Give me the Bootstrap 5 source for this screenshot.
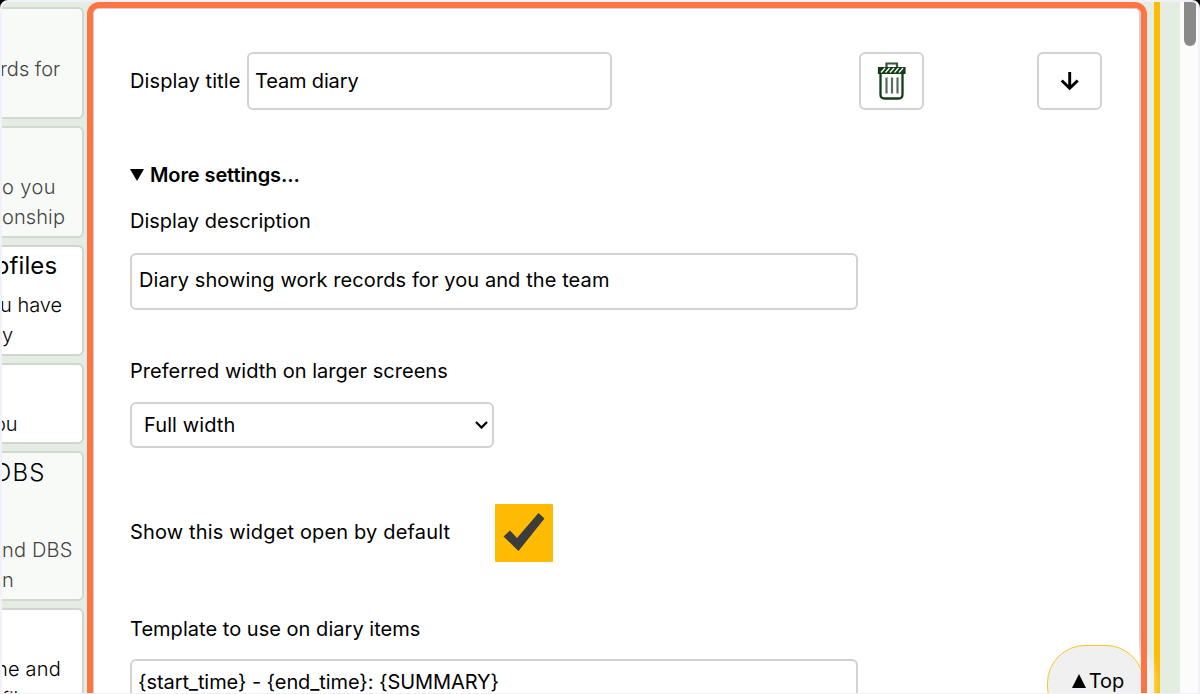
<!DOCTYPE html>
<html lang="en">
<head>
<meta charset="utf-8">
<meta name="viewport" content="width=device-width, initial-scale=1">
<title>Dashboard settings</title>
<link href="https://cdn.jsdelivr.net/npm/bootstrap@5.3.0/dist/css/bootstrap.min.css" rel="stylesheet">
<style>
html,body{height:100%}
body{background:#000;color:#000;font-family:Inter,"Open Sans",sans-serif;font-size:20px;line-height:30px;overflow:hidden}
.shell{height:694px;border:2px solid #f2f0f8;border-bottom-width:1px;border-radius:8px 8px 0 0;background:#e3ede1;overflow:hidden}
.side{width:82px;padding-top:5px;gap:7px}
.tile{border:2px solid #d2d4d2;border-left:0;border-radius:0 6px 6px 0;background:#fff;white-space:nowrap;overflow:hidden;font-weight:300}
.tile.dim{background:#f8faf7;color:#444;border-color:#d2d9d1}
.tile .line{display:block;height:30px;margin-left:-2px}
.tile .heading{font-size:24px;height:32px;line-height:32px}
.panel{width:1060px;height:740px;margin-left:3px;background:#fff;border-radius:12px;padding:50px 43px 0}
.panel::after{content:"";position:absolute;inset:0;border:6px solid #ff7443;border-radius:12px;z-index:3;pointer-events:none}
.panel::before{content:"";position:absolute;inset:6px;border:solid #d2d2d2;border-width:1px 2px 0 1px;border-radius:6px}
.field{border:2px solid #d2d2d2;border-radius:6px;background:#fff;padding:0 6px 0 7px;color:#000;font-size:20px;outline:0;height:58px}
.tool{border:2px solid #d2d2d2;border-radius:6px;background:#fff;width:65px;height:58px;padding:0}
.pick{width:364px;height:46px;padding:0 4px 0 12px}
.tick{width:58px;height:58px;background:#ffbb02;border-radius:1px;margin-left:45px}
.t{white-space:nowrap}
.stripe{width:6px;margin-left:7px;background:#ffbb02}
.track{width:18px;background:#fcfcfc;padding:0 2px 0 4px}
.thumb{height:44px;background:#8a8a8a;border-radius:0 0 6px 6px}
.totop{left:1045px;top:643px;width:97px;height:80px;border:1px solid #ffc226;border-radius:38px;background:#f0f0f0;box-shadow:0 0 14px 7px #fff;z-index:2;padding:20px 0 0;font-size:20px}
</style>
</head>
<body>
<div class="shell d-flex position-relative">
  <aside class="side d-flex flex-column flex-shrink-0">
    <div class="tile dim flex-shrink-0" style="height:112px;padding-top:45px"><span class="line">rds for</span></div>
    <div class="tile dim flex-shrink-0" style="height:112px;padding-top:44px"><span class="line ms-0" style="letter-spacing:.4px">o you</span><span class="line ms-0" style="letter-spacing:.1px">onship</span></div>
    <div class="tile flex-shrink-0" style="height:111px;padding-top:3px"><span class="line heading" style="margin-left:-7px;font-weight:400;letter-spacing:.1px">ofiles</span><span class="line" style="margin-top:8px">u have</span><span class="line ms-0">y</span></div>
    <div class="tile flex-shrink-0" style="height:81px;padding-top:44px"><span class="line" style="margin-left:-8px">ou</span></div>
    <div class="tile dim flex-shrink-0" style="height:150px;padding-top:4px"><span class="line heading text-black" style="margin-left:-8px;letter-spacing:1.2px">DBS</span><span class="line ms-0" style="margin-top:46px;letter-spacing:.2px">nd DBS</span><span class="line ms-0">n</span></div>
    <div class="tile flex-shrink-0" style="height:120px;padding-top:44px"><span class="line" style="margin-left:-6px;letter-spacing:.2px">he and</span><span class="line ms-0">file</span></div>
  </aside>

  <main class="panel position-relative flex-shrink-0">
    <div class="d-flex align-items-center">
      <label class="t" for="title" style="width:117px;letter-spacing:.1px">Display title</label>
      <input class="field" id="title" value="Team diary" style="width:365px;padding-left:6px;letter-spacing:-.15px">
      <button class="tool d-flex align-items-center justify-content-center" aria-label="Delete" style="margin-left:247px">
        <svg width="30" height="40" viewBox="0 0 30 40" fill="none" stroke="#123d17">
          <path d="M9.500 6V2.500h10.500V6" stroke-width="2.200" stroke="#35573a"/>
          <path d="M1.500 6.500h26.500v6H1.500z" fill="#123d17" stroke-width="1.200"/>
          <path d="M4 11.500l4-4.500M8.500 11.500l4-4.500M13 11.500l4-4.500M17.500 11.500l4-4.500M22 11.500l4-4.500" stroke="#fff" stroke-width="1.300"/>
          <path d="M3.500 13v20.500q0 4 4 4h14q4 0 4-4V13" stroke-width="2.300"/>
          <path d="M9.500 16.500v16M15 16.500v16M20.500 16.500v16" stroke-width="2.200" stroke="#56705a"/>
        </svg>
      </button>
      <button class="tool d-flex align-items-center justify-content-center" aria-label="Move down" style="margin-left:113px">
        <svg width="20" height="20" viewBox="0 0 20 20" fill="none" stroke="#000" stroke-width="2.900"><path d="M9.700 1v16M1.700 9.500l8 7.700 8-7.700"/></svg>
      </button>
    </div>
    <div class="d-flex align-items-center fw-semibold" style="margin-top:50px;height:30px">
      <svg width="14" height="12" viewBox="0 0 14 12"><path d="M0 0h14L7 12z"/></svg>
      <span class="t" style="margin-left:6px;letter-spacing:-.1px">More settings...</span>
    </div>
    <label class="t d-block" for="desc" style="margin-top:16px">Display description</label>
    <input class="field d-block" id="desc" value="Diary showing work records for you and the team" style="width:728px;margin-top:17px;padding-bottom:3px;height:57px;letter-spacing:.09px">
    <label class="t d-block" style="margin-top:46px;letter-spacing:.02px">Preferred width on larger screens</label>
    <div class="field pick d-flex align-items-center justify-content-between" role="button" style="margin-top:16px">
      <span class="t" style="letter-spacing:.1px">Full width</span>
      <svg width="13" height="8" viewBox="0 0 13 8" fill="none" stroke="#000" stroke-width="2.300"><path d="M1 1l5.500 5.500L12 1"/></svg>
    </div>
    <div class="d-flex align-items-center" style="margin-top:56px">
      <span class="t" style="width:320px;margin-top:-3px;letter-spacing:.16px">Show this widget open by default</span>
      <div class="tick" role="checkbox" aria-checked="true"><svg class="d-block" width="58" height="58" viewBox="0 0 58 58"><path d="M8.500 32.500l6.500-6 7 7.500L43.500 9l6 5.500L23.500 47z" fill="#3c3c3c"/></svg></div>
    </div>
    <label class="t d-block" for="tpl" style="margin-top:52px;letter-spacing:.03px">Template to use on diary items</label>
    <input class="field d-block" id="tpl" value="{start_time} - {end_time}: {SUMMARY}" style="width:728px;margin-top:15px;padding-left:6px;padding-bottom:12px;letter-spacing:-.08px">
  </main>

  <div class="stripe flex-shrink-0"></div>
  <div class="track ms-auto flex-shrink-0"><div class="thumb"></div></div>
  <button class="totop position-absolute d-flex justify-content-center text-black"><span class="d-flex align-items-center" style="height:30px;margin-left:5px"><svg width="14" height="14" viewBox="0 0 14 14"><path d="M0 14h14L7 0z"/></svg><span class="t" style="margin-left:3px">Top</span></span></button>
</div>
<script src="https://cdn.jsdelivr.net/npm/bootstrap@5.3.0/dist/js/bootstrap.bundle.min.js"></script>
</body>
</html>
